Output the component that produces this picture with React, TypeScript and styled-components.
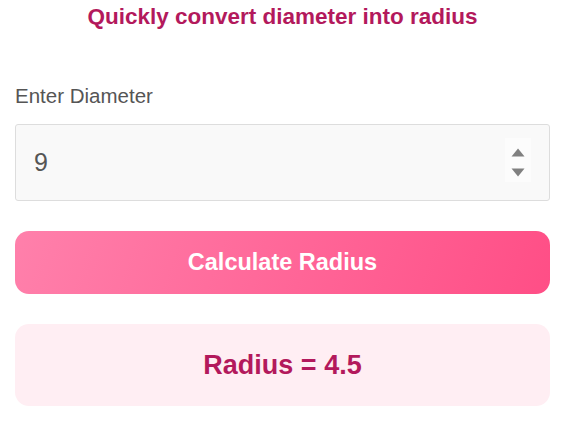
import { useState } from "react";
import styled, { createGlobalStyle } from "styled-components";

const GlobalStyle = createGlobalStyle`
  body {
    margin: 0;
    background: #ffffff;
    font-family: "Liberation Sans", Arial, sans-serif;
  }
`;

const Page = styled.div`
  padding: 0 15px;
`;

const Title = styled.h2`
  margin: 0;
  padding-top: 3px;
  text-align: center;
  font-size: 22.5px;
  font-weight: bold;
  color: #b3195c;
  line-height: 28px;
`;

const Label = styled.label`
  display: block;
  margin-top: 53px;
  font-size: 20.5px;
  color: #555555;
  line-height: 24px;
`;

const InputWrap = styled.div`
  position: relative;
  margin-top: 16px;
`;

const Input = styled.input`
  box-sizing: border-box;
  width: 100%;
  height: 77px;
  padding: 0 18px;
  border: 1px solid #dddddd;
  border-radius: 3px;
  background: #f9f9f9;
  font-family: "Liberation Sans", Arial, sans-serif;
  font-size: 25px;
  color: #555555;
  outline: none;
  -moz-appearance: textfield;
  &::-webkit-inner-spin-button,
  &::-webkit-outer-spin-button {
    -webkit-appearance: none;
    margin: 0;
  }
`;

const Spinner = styled.div`
  position: absolute;
  right: 19px;
  top: 14px;
  width: 26px;
  height: 44px;
  box-sizing: border-box;
  padding-top: 10px;
  display: flex;
  flex-direction: column;
  align-items: center;
  gap: 11px;
  background: #fcfcfc;
  svg {
    display: block;
  }
`;

const Button = styled.button`
  display: block;
  box-sizing: border-box;
  width: 100%;
  height: 63px;
  margin-top: 30px;
  border: none;
  border-radius: 14px;
  background: linear-gradient(110deg, #ff80ab 0%, #ff4e86 100%);
  color: #ffffff;
  font-family: "Liberation Sans", Arial, sans-serif;
  font-size: 23.5px;
  font-weight: bold;
  cursor: pointer;
`;

const Result = styled.div`
  margin-top: 30px;
  height: 82px;
  border-radius: 14px;
  background: #ffeef3;
  display: flex;
  align-items: center;
  justify-content: center;
  font-size: 27px;
  font-weight: bold;
  color: #b3195c;
`;

export default function App() {
  const [diameter, setDiameter] = useState("9");
  const [radius, setRadius] = useState<number | null>(4.5);

  return (
    <Page>
      <GlobalStyle />
      <Title>Quickly convert diameter into radius</Title>
      <Label htmlFor="diameter">Enter Diameter</Label>
      <InputWrap>
        <Input
          id="diameter"
          type="number"
          value={diameter}
          onChange={(e) => setDiameter(e.target.value)}
        />
        <Spinner>
          <svg width="14" height="9" viewBox="0 0 14 9">
            <path d="M7 0.5 L13.5 8.5 H0.5 Z" fill="#808080" />
          </svg>
          <svg width="14" height="9" viewBox="0 0 14 9">
            <path d="M0.5 0.5 H13.5 L7 8.5 Z" fill="#808080" />
          </svg>
        </Spinner>
      </InputWrap>
      <Button onClick={() => setRadius(parseFloat(diameter) / 2)}>
        Calculate Radius
      </Button>
      <Result>Radius = {radius}</Result>
    </Page>
  );
}
